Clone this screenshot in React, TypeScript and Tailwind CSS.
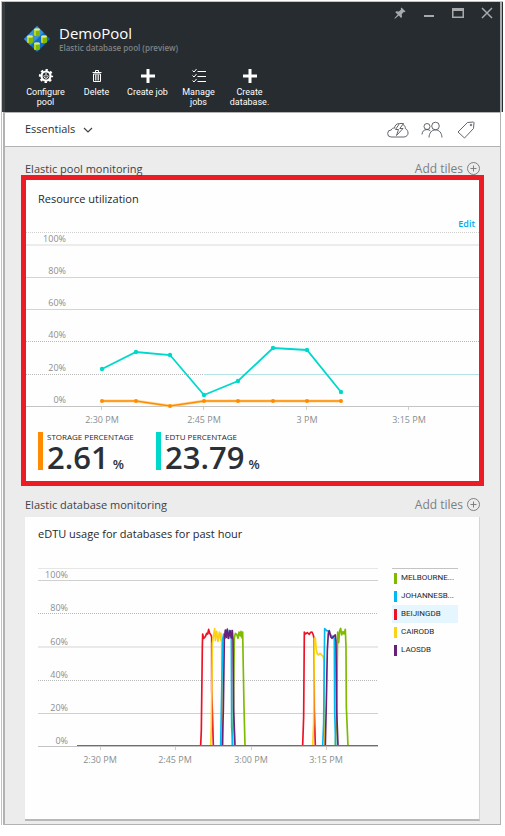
import React from "react";

type Series = { name: string; color: string; swatch: string; points: string[]; selected?: boolean };

const UTIL_GRID = [
  { label: "100%", y: 13 },
  { label: "80%", y: 45 },
  { label: "60%", y: 77 },
  { label: "40%", y: 109 },
  { label: "20%", y: 142 },
  { label: "0%", y: 174 },
];

const UTIL_TICKS = [
  { label: "2:30 PM", x: 76 },
  { label: "2:45 PM", x: 178 },
  { label: "3 PM", x: 281 },
  { label: "3:15 PM", x: 383 },
];

const EDTU: [number, number][] = [
  [76, 137], [110, 120], [144, 123], [178, 163], [212, 149], [247, 116], [281, 118], [315, 160],
];

const STORAGE: [number, number][] = [
  [76, 169], [110, 169], [144, 174], [178, 169], [212, 169], [247, 169], [281, 169], [315, 169],
];

const USAGE_GRID = [
  { label: "100%", y: 12 },
  { label: "80%", y: 45 },
  { label: "60%", y: 79 },
  { label: "40%", y: 112 },
  { label: "20%", y: 145 },
  { label: "0%", y: 178 },
];

const USAGE_TICKS = [
  { label: "2:30 PM", x: 62 },
  { label: "2:45 PM", x: 137 },
  { label: "3:00 PM", x: 213 },
  { label: "3:15 PM", x: 288 },
];

const DATABASES: Series[] = [
  {
    name: "MELBOURNE...",
    color: "#7fba00",
    swatch: "bg-[#7fba00]",
    points: [
      "127,407 130,320 133,85 136,70 140,73 144,85 147,66 151,78 153,64 156,84 158,66 160,180 162,290 165,407",
      "436,407 440,320 443,66 446,98 449,62 452,55 455,75 459,65 462,72 466,58 468,110 469,290 474,407",
    ],
  },
  {
    name: "JOHANNESB...",
    color: "#00b9f2",
    swatch: "bg-[#00b9f2]",
    points: [
      "92,407 94,300 98,90 101,72 105,85 109,62 113,84 118,62 123,82 124,62 125,350 128,407",
      "398,407 401,340 404,56 410,62 416,64 422,75 428,80 433,85 434,300 437,407",
    ],
  },
  {
    name: "BEIJINGDB",
    color: "#ee1123",
    swatch: "bg-[#ee1123]",
    selected: true,
    points: [
      "32,407 34,360 37,110 38,72 41,85 46,80 50,70 53,72 56,58 59,70 63,75 65,82 65,240 67,300 70,407",
      "338,407 341,320 343,66 346,72 352,68 358,73 362,67 366,66 370,75 372,85 373,300 376,407",
    ],
  },
  {
    name: "CAIRODB",
    color: "#fcd116",
    swatch: "bg-[#fcd116]",
    points: [
      "62,407 64,350 67,100 70,80 74,56 76,92 80,64 84,94 88,66 92,90 93,70 95,95 96,300 100,407",
      "368,407 371,340 373,85 376,84 379,120 382,132 386,135 390,130 395,135 400,140 402,155 403,350 405,407",
    ],
  },
  {
    name: "LAOSDB",
    color: "#68217a",
    swatch: "bg-[#68217a]",
    points: [
      "97,407 100,300 103,85 106,60 109,82 112,57 116,85 120,62 124,84 127,62 129,90 131,300 135,407",
      "406,407 409,280 412,120 415,70 418,62 422,80 426,85 432,78 436,75 438,95 440,300 444,407",
    ],
  },
];

// Later entries are painted on top; Beijing goes first so the neighbours overlap it.
const DRAW_ORDER = [2, 0, 3, 1, 4];

function toPoints(data: [number, number][]) {
  return data.map((p) => p.join(",")).join(" ");
}

function PoolLogo() {
  const cells = [
    [13, 7],
    [6, 14],
    [20, 14],
    [13, 21],
  ];
  return (
    <svg className="size-[26px] shrink-0" viewBox="0 1 26 26" aria-hidden="true">
      <path d="M13 1 26 14 13 27 0 14Z" fill="#0f6cc4" />
      <path d="M13 1 0 14l6.500 6.500L19.500 7.500Z" fill="#3c8fdb" />
      {cells.map(([x, y]) => (
        <g key={`${x}-${y}`}>
          <path d={`M${x - 3} ${y - 2.5}v5.500a3 1.200 0 0 0 6 0v-5.500z`} fill="#7fba00" />
          <path d={`M${x - 3} ${y - 2.5}v5.500a3 1.200 0 0 0 2 1.100v-6z`} fill="#b8d432" />
          <ellipse cx={x} cy={y - 2.5} rx="3" ry="1.200" fill="#d9ec8a" />
        </g>
      ))}
    </svg>
  );
}

function GearIcon() {
  return (
    <svg className="size-4" viewBox="0 0 16 16" fill="none" stroke="#fff" aria-hidden="true">
      <circle cx="8" cy="8" r="4.500" strokeWidth="2.200" />
      <circle cx="8" cy="8" r="6" strokeWidth="2.200" strokeDasharray="2.356 2.356" strokeDashoffset="1.178" />
      <path d="M8 5v3.500M6.300 7.200a2 2 0 1 0 3.400 0" strokeWidth="1" />
    </svg>
  );
}

function TrashIcon() {
  return (
    <svg className="size-4" viewBox="0 0 16 16" fill="none" stroke="#fff" aria-hidden="true">
      <path d="M3.500 4.500h9M6.500 4V2.500h3V4" />
      <path d="M4.500 6v7.500h7V6z" />
      <path d="M6.500 6.500v6M8 6.500v6M9.500 6.500v6" strokeWidth="0.800" />
    </svg>
  );
}

function PlusIcon() {
  return (
    <svg className="size-4" viewBox="0 0 16 16" fill="#fff" aria-hidden="true">
      <path d="M6.500 1h3v5.500H15v3H9.500V15h-3V9.500H1v-3h5.500z" />
    </svg>
  );
}

function ChecklistIcon() {
  return (
    <svg className="size-4" viewBox="0 0 16 16" fill="none" stroke="#fff" aria-hidden="true">
      <path d="M6.500 3.500H15M6.500 8.500H15M6.500 13.500H15" />
      <path d="m1.500 2.500 1.500 1.500 2.500-3M1.500 7.500 3 9l2.500-3M1.500 12.500 3 14l2.500-3" />
    </svg>
  );
}

function WindowControls() {
  const cls = "flex h-[22px] w-[26px] items-center justify-center";
  return (
    <div className="flex justify-end gap-[3px] text-[#a6aaad]">
      <button className={cls} aria-label="Pin">
        <svg className="size-3" viewBox="0 0 12 12" fill="currentColor" aria-hidden="true">
          <path d="m7.500.5 4 4-1 .8-.8-.2-2 2.200.3 2.700-1 .9L4.800 8.500 1 11.800l-.6-.5L3.700 7.400 1.300 5.200l.9-1 2.700.3 2.200-2-.4-1z" />
        </svg>
      </button>
      <button className={cls} aria-label="Minimize">
        <svg className="size-3" viewBox="0 0 12 12" fill="currentColor" aria-hidden="true">
          <path d="M1 8h10v2H1z" />
        </svg>
      </button>
      <button className={cls} aria-label="Maximize">
        <svg className="size-3" viewBox="0 0 12 12" fill="currentColor" aria-hidden="true">
          <path d="M0 1h12v10H0zM1.500 4v5.500h9V4z" fillRule="evenodd" />
        </svg>
      </button>
      <button className={cls} aria-label="Close">
        <svg className="size-3" viewBox="0 0 12 12" fill="none" stroke="currentColor" strokeWidth="1.500" aria-hidden="true">
          <path d="m1 1 10 10M11 1 1 11" />
        </svg>
      </button>
    </div>
  );
}

function SectionHeading({ title }: { title: string }) {
  return (
    <div className="flex items-center justify-between px-5 leading-3">
      <h2 className="text-[11px] text-[#3e4347]">{title}</h2>
      <button className="flex items-center gap-1 text-[12px] text-[#7b7f82]">
        Add tiles
        <svg className="size-[13px]" viewBox="0 0 13 13" fill="none" stroke="currentColor" aria-hidden="true">
          <circle cx="6.500" cy="6.500" r="6" />
          <path d="M6.500 3.500v6M3.500 6.500h6" />
        </svg>
      </button>
    </div>
  );
}

function UtilizationChart() {
  return (
    <svg className="block h-auto w-full" viewBox="0 0 453 196" role="img" aria-label="Resource utilization">
      <path d="M0 .5H453" stroke="#cfcfcf" strokeDasharray="1 1" />
      {UTIL_GRID.map((g, i) => (
        <g key={g.label}>
          {i === 0 ? (
            <path d="M0 13H453" stroke="#ececec" strokeWidth="2" />
          ) : (
            <path
              d={`M0 ${g.y + 0.5}H453`}
              stroke={i === 5 ? "#c4c4c4" : i === 3 || i === 4 ? "#b8baba" : "#d2d4d4"}
              strokeDasharray={i === 3 || i === 4 ? "1 1" : undefined}
            />
          )}
          <text x="40" y={g.y - 3} textAnchor="end" fontSize="9" fill="#8b8e90">
            {g.label}
          </text>
        </g>
      ))}
      <path d="M178 142.500H453" stroke="#b4e4e6" />
      {UTIL_TICKS.map((t) => (
        <g key={t.label}>
          <path d={`M${t.x - 0.5} 175v3`} stroke="#cfcfcf" />
          <text x={t.x} y="191" textAnchor="middle" fontSize="9" fill="#8b8e90">
            {t.label}
          </text>
        </g>
      ))}
      <polyline points={toPoints(STORAGE)} fill="none" stroke="#ffd9a0" strokeWidth="3" />
      <polyline points={toPoints(STORAGE)} fill="none" stroke="#ff8c00" strokeWidth="1.500" />
      <polyline points={toPoints(EDTU)} fill="none" stroke="#00d8cc" strokeWidth="1.800" />
      {STORAGE.map(([x, y]) => (
        <circle key={x} cx={x} cy={y} r="2" fill="#ff8c00" />
      ))}
      {EDTU.map(([x, y]) => (
        <circle key={x} cx={x} cy={y} r="2.200" fill="#00d8cc" />
      ))}
    </svg>
  );
}

function UsageChart() {
  return (
    <svg className="block h-auto min-w-0 flex-1" viewBox="0 0 340 198" role="img" aria-label="eDTU usage for databases">
      <path d="M0 .5H340" stroke="#e6e6e6" />
      {USAGE_GRID.map((g, i) => (
        <g key={g.label}>
          {i === 2 ? (
            <path d="M0 79H340" stroke="#e9e9e9" strokeWidth="2" />
          ) : (
            <path
              d={`M0 ${g.y + 0.5}H340`}
              stroke={i === 5 ? "#c4c4c4" : i === 1 || i === 3 ? "#b8baba" : "#d0d0d0"}
              strokeDasharray={i === 1 || i === 3 ? "1 1" : undefined}
            />
          )}
          <text x="30" y={g.y - 2} textAnchor="end" fontSize="9" fill="#8b8e90">
            {g.label}
          </text>
        </g>
      ))}
      {USAGE_TICKS.map((t) => (
        <g key={t.label}>
          <path d={`M${t.x + 0.5} 179v3`} stroke="#cfcfcf" />
          <text x={t.x} y="195" textAnchor="middle" fontSize="9" fill="#8b8e90">
            {t.label}
          </text>
        </g>
      ))}
      <g transform="translate(152 42) scale(.3333)" fill="none" strokeWidth="5" strokeLinejoin="round">
        {DRAW_ORDER.map((i) =>
          DATABASES[i].points.map((p) => <polyline key={p} points={p} stroke={DATABASES[i].color} />),
        )}
      </g>
      <path d="M39 177.500H340" stroke="#8f5f66" />
    </svg>
  );
}

function Metric({ label, value, bar }: { label: string; value: string; bar: string }) {
  return (
    <div className={`flex h-[38px] w-[118px] flex-col border-l-[5px] pl-1 ${bar}`}>
      <span className="text-[8px] leading-[9px] whitespace-nowrap text-[#25282b]">{label}</span>
      <span className="flex items-baseline gap-1 text-[31px] leading-[32px] font-semibold whitespace-nowrap text-[#2b2f36]">
        {value}
        <span className="text-[13px]">%</span>
      </span>
    </div>
  );
}

const ACTIONS = [
  { label: "Configure pool", icon: <GearIcon /> },
  { label: "Delete", icon: <TrashIcon /> },
  { label: "Create job", icon: <PlusIcon /> },
  { label: "Manage jobs", icon: <ChecklistIcon /> },
  { label: "Create database.", icon: <PlusIcon /> },
];

export default function App() {
  return (
    <div className="bg-white pt-px pr-0.5 pl-px font-['Open_Sans','Noto_Sans',sans-serif]">
      <div className="border-t border-l border-[#c0c2c4]">
        <header className="border-r border-[#272c30] bg-[#272c30] text-white">
          <div className="border-r-2 border-l-[3px] border-r-[#a9acae] border-l-[#363c40] pb-[5px]">
            <WindowControls />
            <div className="flex items-center gap-[9px] pl-[19px]">
              <PoolLogo />
              <div>
                <h1 className="text-[15px] leading-[18px]">DemoPool</h1>
                <p className="text-[8px] leading-3 font-semibold text-[#7e8386]">Elastic database pool (preview)</p>
              </div>
            </div>
            <nav className="mt-3.5 flex pl-[15px]">
              {ACTIONS.map((a) => (
                <button
                  key={a.label}
                  className="flex w-[51px] flex-col items-center gap-[3px] px-1 font-['Roboto',sans-serif] text-[9px] leading-[10px]"
                >
                  {a.icon}
                  {a.label}
                </button>
              ))}
            </nav>
          </div>
        </header>

        <div className="mr-0.5 ml-px border-r border-b border-l-2 border-[#b2b2b2] bg-[#ececec]">
          <div className="flex h-[35px] items-center justify-between border-y border-[#b2b2b2] bg-white pr-[23px] pl-5">
            <button className="flex items-center gap-2 text-[11px] text-[#2b2f36]">
              Essentials
              <svg className="size-2.5" viewBox="0 0 10 10" fill="none" stroke="#3e4347" strokeWidth="1.200" aria-hidden="true">
                <path d="m1 3 4 4 4-4" />
              </svg>
            </button>
            <div className="flex items-center gap-3 text-[#50565c]">
              <button aria-label="Quick start">
                <svg className="h-[18px] w-[22px]" viewBox="0 0 22 18" fill="none" stroke="currentColor" strokeWidth="0.900" aria-hidden="true">
                  <path d="M17 16H4a3.500 3.500 0 0 1 .3-7C4.600 7.600 6 6.800 7.500 7.200 7.800 4.300 9.500 2.600 12 2.600M16 3.500c1.600.8 2.500 2.300 2.300 4 3.500 1.500 4.200 8-1.300 8.500" />
                  <path d="M12.500 2.500 8.500 8.500h3L9.500 14.500 16 7.500h-3.200l3.700-5z" />
                </svg>
              </button>
              <button aria-label="Users">
                <svg className="h-[18px] w-[22px]" viewBox="0 0 22 18" fill="none" stroke="currentColor" strokeWidth="0.900" aria-hidden="true">
                  <circle cx="6" cy="5.500" r="3" />
                  <circle cx="14.500" cy="5" r="3.800" />
                  <path d="M1 13.500C1.300 10 3 8.600 6 8.600c1.500 0 2.800.5 3.600 1.600M8 16.500c.3-4.500 2.500-7.600 6.500-7.600s6.200 3.100 6.500 7.600" />
                </svg>
              </button>
              <button aria-label="Tags">
                <svg className="h-[18px] w-[22px]" viewBox="0 0 18 18" fill="none" stroke="currentColor" strokeWidth="0.900" aria-hidden="true">
                  <path d="M1 11 10.500 1.500l6-.5.5.5-.5 6L7.500 17z" />
                  <circle cx="14" cy="4" r=".8" />
                </svg>
              </button>
            </div>
          </div>

          <div className="pt-[15px]">
            <SectionHeading title="Elastic pool monitoring" />
          </div>
          <section className="mx-4 border-[5px] border-[#ed1c24] bg-[#fefefe] pt-[11px] pb-[11px]">
            <h3 className="pl-3 text-[11px] leading-4 text-[#25282b]">Resource utilization</h3>
            <div className="mt-[11px] mb-0.5 flex justify-end pr-1 text-[9px] leading-3 font-semibold text-[#00abec]">
              <a href="#edit">Edit</a>
            </div>
            <UtilizationChart />
            <div className="mt-1 flex pl-3">
              <Metric label="STORAGE PERCENTAGE" value="2.61" bar="border-[#ff8c00]" />
              <Metric label="EDTU PERCENTAGE" value="23.79" bar="border-[#00d8cc]" />
            </div>
          </section>

          <div className="pt-3 pb-[6px]">
            <SectionHeading title="Elastic database monitoring" />
          </div>
          <section className="mr-5 mb-[3px] ml-5 border-r border-b-2 border-r-[#d4d4d4] border-b-[#b8b8b8] bg-[#fefefe] pt-[9px] pb-[53px]">
            <h3 className="pl-[13px] text-[11px] leading-4 text-[#25282b]">eDTU usage for databases for past hour</h3>
            <div className="mt-[26px] flex items-start pr-[21px] pl-[13px]">
              <UsageChart />
              <ul className="ml-3.5 w-[66px] border-t border-[#c4c4c4]">
                {DATABASES.map((d) => (
                  <li
                    key={d.name}
                    className={`flex h-[18px] items-center gap-1 pl-0.5 font-['Roboto',sans-serif] text-[8px] whitespace-nowrap text-[#25282b] ${d.selected ? "bg-[#e5f6fe]" : ""}`}
                  >
                    <span className={`h-[11px] w-[3px] shrink-0 ${d.swatch}`} />
                    {d.name}
                  </li>
                ))}
              </ul>
            </div>
          </section>
        </div>
      </div>
    </div>
  );
}
